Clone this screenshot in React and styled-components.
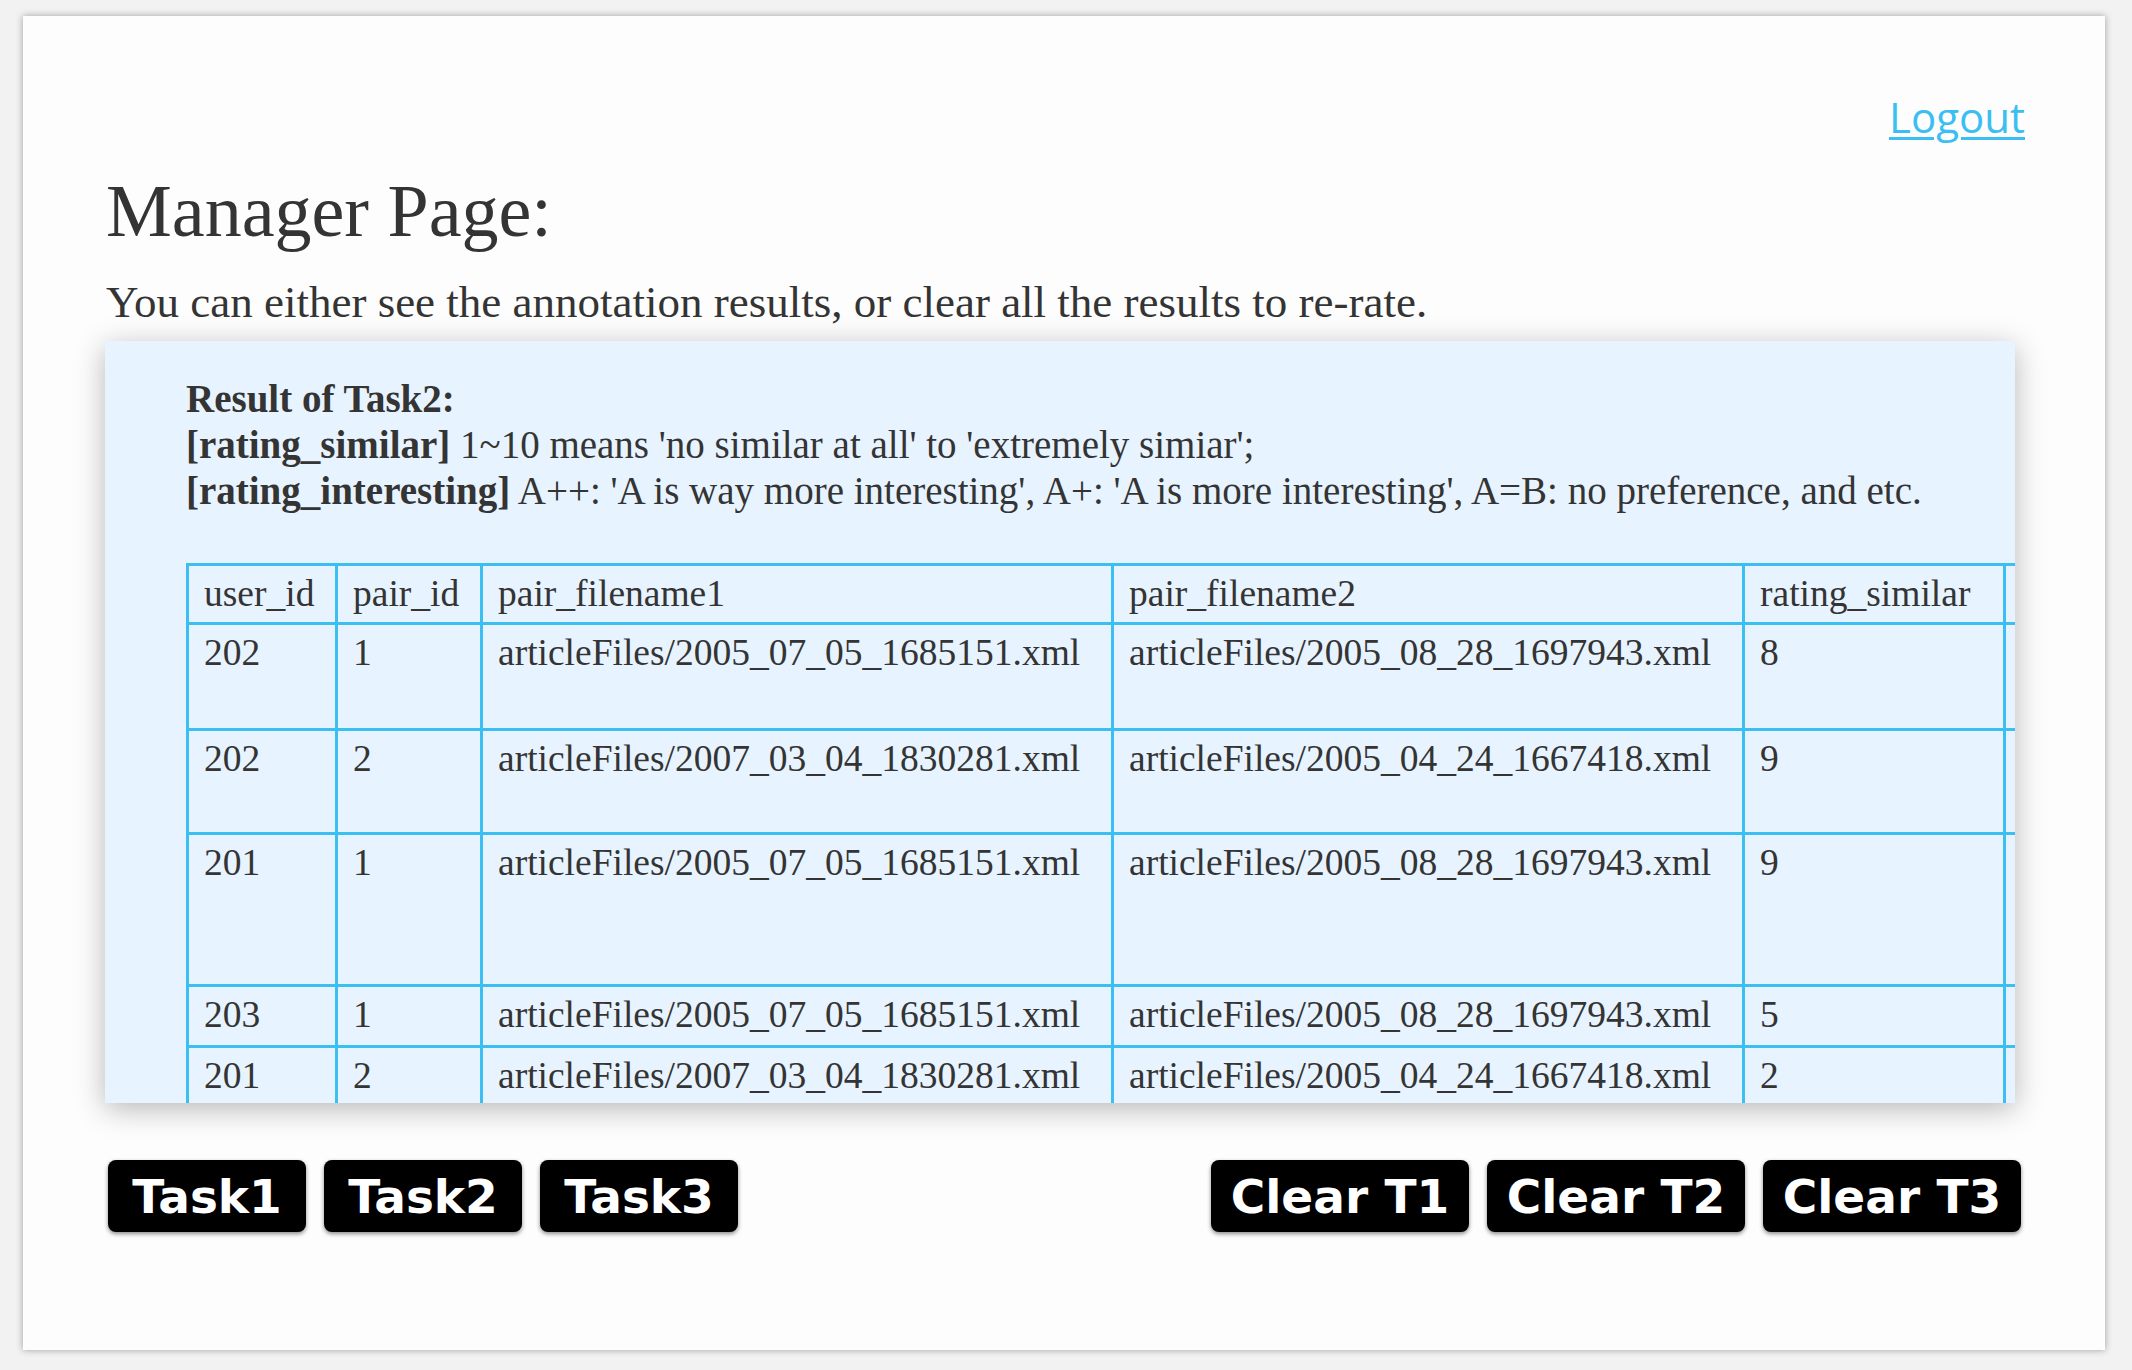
import React from "react";
import styled, { createGlobalStyle } from "styled-components";

const GlobalStyle = createGlobalStyle`
  html, body {
    margin: 0;
    padding: 0;
    background: #f2f2f2;
  }
  * {
    box-sizing: border-box;
  }
`;

const Card = styled.div`
  margin: 16px 27px 20px 23px;
  height: 1334px;
  padding: 72px 83px 0 83px;
  background: #fdfdfd;
  box-shadow: 0 0 7px rgba(0, 0, 0, 0.35);
  font-family: "Liberation Serif", "Times New Roman", serif;
  color: #343434;
`;

const TopBar = styled.div`
  display: flex;
  justify-content: flex-end;
`;

const LogoutLink = styled.a`
  font-family: "Open Sans", "Liberation Sans", sans-serif;
  font-size: 42px;
  line-height: 57px;
  color: #3bbef2;
  text-decoration: underline;
  text-decoration-thickness: 3px;
  text-underline-offset: 4px;
  margin-right: -3px;
`;

const Title = styled.h1`
  margin: 24px 0 0 0;
  font-size: 74px;
  line-height: 85px;
  font-weight: normal;
`;

const Lead = styled.p`
  margin: 23px 0 0 0;
  font-size: 45px;
  line-height: 50px;
  white-space: nowrap;
`;

const Panel = styled.div`
  margin: 14px 7px 0 -1px;
  height: 762px;
  padding: 35px 0 0 81px;
  background: #e7f3fe;
  box-shadow: 0 6px 28px rgba(0, 0, 0, 0.28);
  overflow: hidden;
`;

const Legend = styled.div`
  font-size: 39px;
  line-height: 46px;
  margin-bottom: 49px;
  white-space: nowrap;
`;

const Label = styled.b`
  font-weight: bold;
`;

const ResultTable = styled.table`
  table-layout: fixed;
  border-collapse: separate;
  border-spacing: 0;
  width: 2520px;
  border-top: 3px solid #3bbef2;
  border-left: 3px solid #3bbef2;
  font-size: 37.5px;
  line-height: 46px;
`;

const Row = styled.tr`
  height: ${(p) => p.$h}px;
`;

const HeadCell = styled.th`
  width: ${(p) => p.$w}px;
  font-weight: normal;
  text-align: left;
  vertical-align: top;
  padding: 5px 15px;
  border-right: 3px solid #3bbef2;
  border-bottom: 3px solid #3bbef2;
  white-space: nowrap;
  overflow: hidden;
`;

const Cell = styled.td`
  vertical-align: top;
  padding: 5px 15px;
  border-right: 3px solid #3bbef2;
  border-bottom: 3px solid #3bbef2;
  white-space: nowrap;
  overflow: hidden;
`;

const ButtonRow = styled.div`
  margin-top: 57px;
  display: flex;
  justify-content: space-between;
  padding: 0 1px 0 2px;
`;

const ButtonGroup = styled.div`
  display: flex;
  gap: 18px;
`;

const Button = styled.button`
  width: ${(p) => (p.$wide ? 258 : 198)}px;
  height: 72px;
  padding: 0;
  display: flex;
  align-items: center;
  justify-content: center;
  border: none;
  border-radius: 8px;
  background: #000;
  color: #fff;
  font-family: "DejaVu Sans", "Liberation Sans", sans-serif;
  font-weight: bold;
  font-size: 47px;
  line-height: 1;
  white-space: nowrap;
  box-shadow: 0 2px 4px rgba(0, 0, 0, 0.45);
  cursor: pointer;
`;

const columns = [
  { name: "user_id", w: 149 },
  { name: "pair_id", w: 145 },
  { name: "pair_filename1", w: 631 },
  { name: "pair_filename2", w: 631 },
  { name: "rating_similar", w: 261 },
  { name: "rating_interesting", w: 330 },
  { name: "comment", w: 370 },
];

const rows = [
  { h: 106, cells: ["202", "1", "articleFiles/2005_07_05_1685151.xml", "articleFiles/2005_08_28_1697943.xml", "8", "A+", ""] },
  { h: 104, cells: ["202", "2", "articleFiles/2007_03_04_1830281.xml", "articleFiles/2005_04_24_1667418.xml", "9", "A=B", ""] },
  { h: 152, cells: ["201", "1", "articleFiles/2005_07_05_1685151.xml", "articleFiles/2005_08_28_1697943.xml", "9", "A++", ""] },
  { h: 61, cells: ["203", "1", "articleFiles/2005_07_05_1685151.xml", "articleFiles/2005_08_28_1697943.xml", "5", "B+", ""] },
  { h: 106, cells: ["201", "2", "articleFiles/2007_03_04_1830281.xml", "articleFiles/2005_04_24_1667418.xml", "2", "A=B", ""] },
  { h: 61, cells: ["203", "2", "articleFiles/2007_03_04_1830281.xml", "articleFiles/2005_04_24_1667418.xml", "7", "A+", ""] },
];

const App = () => {
  return (
    <>
      <GlobalStyle />
      <Card>
        <TopBar>
          <LogoutLink href="#">Logout</LogoutLink>
        </TopBar>
        <Title>Manager Page:</Title>
        <Lead>
          You can either see the annotation results, or clear all the results to re-rate.
        </Lead>
        <Panel>
          <Legend>
            <Label>Result of Task2:</Label>
            <br />
            <Label>[rating_similar]</Label> 1~10 means 'no similar at all' to 'extremely simiar';
            <br />
            <Label>[rating_interesting]</Label> A++: 'A is way more interesting', A+: 'A is more
            interesting', A=B: no preference, and etc.
          </Legend>
          <ResultTable>
            <thead>
              <Row $h={59}>
                {columns.map((c) => (
                  <HeadCell key={c.name} $w={c.w}>
                    {c.name}
                  </HeadCell>
                ))}
              </Row>
            </thead>
            <tbody>
              {rows.map((r, i) => (
                <Row key={i} $h={r.h}>
                  {r.cells.map((v, j) => (
                    <Cell key={j}>{v}</Cell>
                  ))}
                </Row>
              ))}
            </tbody>
          </ResultTable>
        </Panel>
        <ButtonRow>
          <ButtonGroup>
            <Button>Task1</Button>
            <Button>Task2</Button>
            <Button>Task3</Button>
          </ButtonGroup>
          <ButtonGroup>
            <Button $wide>Clear T1</Button>
            <Button $wide>Clear T2</Button>
            <Button $wide>Clear T3</Button>
          </ButtonGroup>
        </ButtonRow>
      </Card>
    </>
  );
};

export default App;
